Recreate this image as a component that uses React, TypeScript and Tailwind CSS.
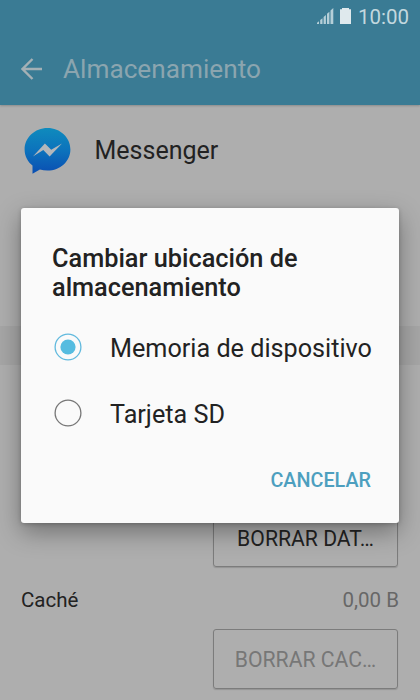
import React from "react";

function StatusBar() {
  return (
    <div className="flex h-8 items-center justify-end pr-[11px] text-[#c3d8df]">
      <svg className="mr-[6px] shrink-0" width="17" height="17" viewBox="0 0 17 17" fill="currentColor">
        <path
          d="M0 16v-1.2l2-1.6V16zM3.2 16v-4l2.3-1.8V16zM6.6 16V9l2.3-2v9zM10 16V5.8l2.4-2V16zM13.5 16V2.4L16.3 0v16z"
          opacity="0.9"
        />
      </svg>
      <svg className="mr-[7px] mt-[-1px] shrink-0" width="11" height="16" viewBox="0 0 11 16" fill="#dfe9ed">
        <path d="M2 0h7v1.2h2V16H0V1.2h2z" />
      </svg>
      <span className="pt-[2px] text-[20.5px] leading-[30px]">10:00</span>
    </div>
  );
}

function MessengerLogo() {
  return (
    <svg width="48" height="48" viewBox="0 0 48 48">
      <defs>
        <linearGradient id="bubble" x1="0" y1="0" x2="0" y2="1">
          <stop offset="0" stopColor="#0f8bbd" />
          <stop offset="0.5" stopColor="#0c72bc" />
          <stop offset="1" stopColor="#0a4eb2" />
        </linearGradient>
      </defs>
      <path
        d="M24.5 1C11.8 1 1.6 10.6 1.6 22.4c0 6.6 3.1 12.3 7.9 16.1v8.2l7.4-4.3c2.4.7 4.9 1.1 7.6 1.1 12.8 0 22.9-9.4 22.9-21.1S37.3 1 24.5 1z"
        fill="url(#bubble)"
      />
      <path d="M9.9 29.6 21.9 16.4l6.3 6.3L39 16.4 26.6 29.6l-6.3-6.6z" fill="#b4b7bb" />
    </svg>
  );
}

function Option({ label, checked }: { label: string; checked?: boolean }) {
  return (
    <div className="flex h-[66px] items-center">
      <svg className="mr-[28px] shrink-0" width="28" height="28" viewBox="0 0 28 28">
        <circle cx="14" cy="14" r="12.9" fill="none" stroke={checked ? "#62bade" : "#777777"} strokeWidth="1.3" />
        {checked && <circle cx="14" cy="14" r="7.6" fill="#56bce0" />}
      </svg>
      <span className="whitespace-nowrap pt-[3px] text-[25.2px] leading-[30px]">{label}</span>
    </div>
  );
}

export default function App() {
  return (
    <div className="relative h-[700px] w-[420px] overflow-hidden bg-[#aeaeae] font-['Roboto',sans-serif] text-[#222222]">
      <header className="h-[105px] bg-[#3a7b94] shadow-[0_1px_2px_rgba(0,0,0,0.2)]">
        <StatusBar />
        <div className="flex h-[73px] items-center pl-[21px]">
          <svg className="mr-[20px]" width="22" height="22" viewBox="0 0 22 22" fill="none" stroke="#a4b0b5" strokeWidth="2.4">
            <path d="M11.5 1 1.5 11l10 10M1.5 11H21" />
          </svg>
          <span className="text-[26.2px] leading-[30px] text-[#8ba5af]">Almacenamiento</span>
        </div>
      </header>

      <section className="flex h-[221px] items-start pl-[23px] pt-[22px]">
        <MessengerLogo />
        <span className="ml-[23.5px] mt-[9px] text-[25px] leading-[30px]">Messenger</span>
      </section>
      <div className="h-[39px] bg-[#a6a6a6]" />
      <section className="px-[21px] pt-[143px]">
        <div className="ml-[192px] flex h-[59px] w-[185px] items-center justify-center rounded-[3px] border border-[#7c7c7c] pt-[2px] text-[21.2px] shadow-[0_1px_1px_rgba(0,0,0,0.15)]">
          BORRAR DAT…
        </div>
        <div className="flex h-[62px] items-center justify-between pt-[4px] text-[20.5px]">
          <span>Caché</span>
          <span className="text-[#676767]">0,00 B</span>
        </div>
        <div className="ml-[192px] flex h-[60px] w-[185px] items-center justify-center rounded-[3px] border border-[#7c7c7c] pt-[2px] text-[21.2px] text-[#777777] shadow-[0_1px_1px_rgba(0,0,0,0.15)]">
          BORRAR CAC…
        </div>
      </section>

      <div
        role="dialog"
        className="absolute left-[21px] top-[208px] flex h-[315px] w-[378px] flex-col rounded-[3px] bg-[#fafafa] px-[33px] pt-[36px] shadow-[0_9px_24px_rgba(0,0,0,0.35),0_1px_4px_rgba(0,0,0,0.2)]"
      >
        <h1 className="-ml-[2px] text-[25.3px] font-medium leading-[29px]">
          Cambiar ubicación de
          <br />
          almacenamiento
        </h1>
        <div className="mt-[12px]">
          <Option label="Memoria de dispositivo" checked />
          <Option label="Tarjeta SD" />
        </div>
        <button className="-mr-[5px] mt-[22px] self-end text-[19.8px] font-medium leading-[26px] text-[#4d9fbf]">CANCELAR</button>
      </div>
    </div>
  );
}
